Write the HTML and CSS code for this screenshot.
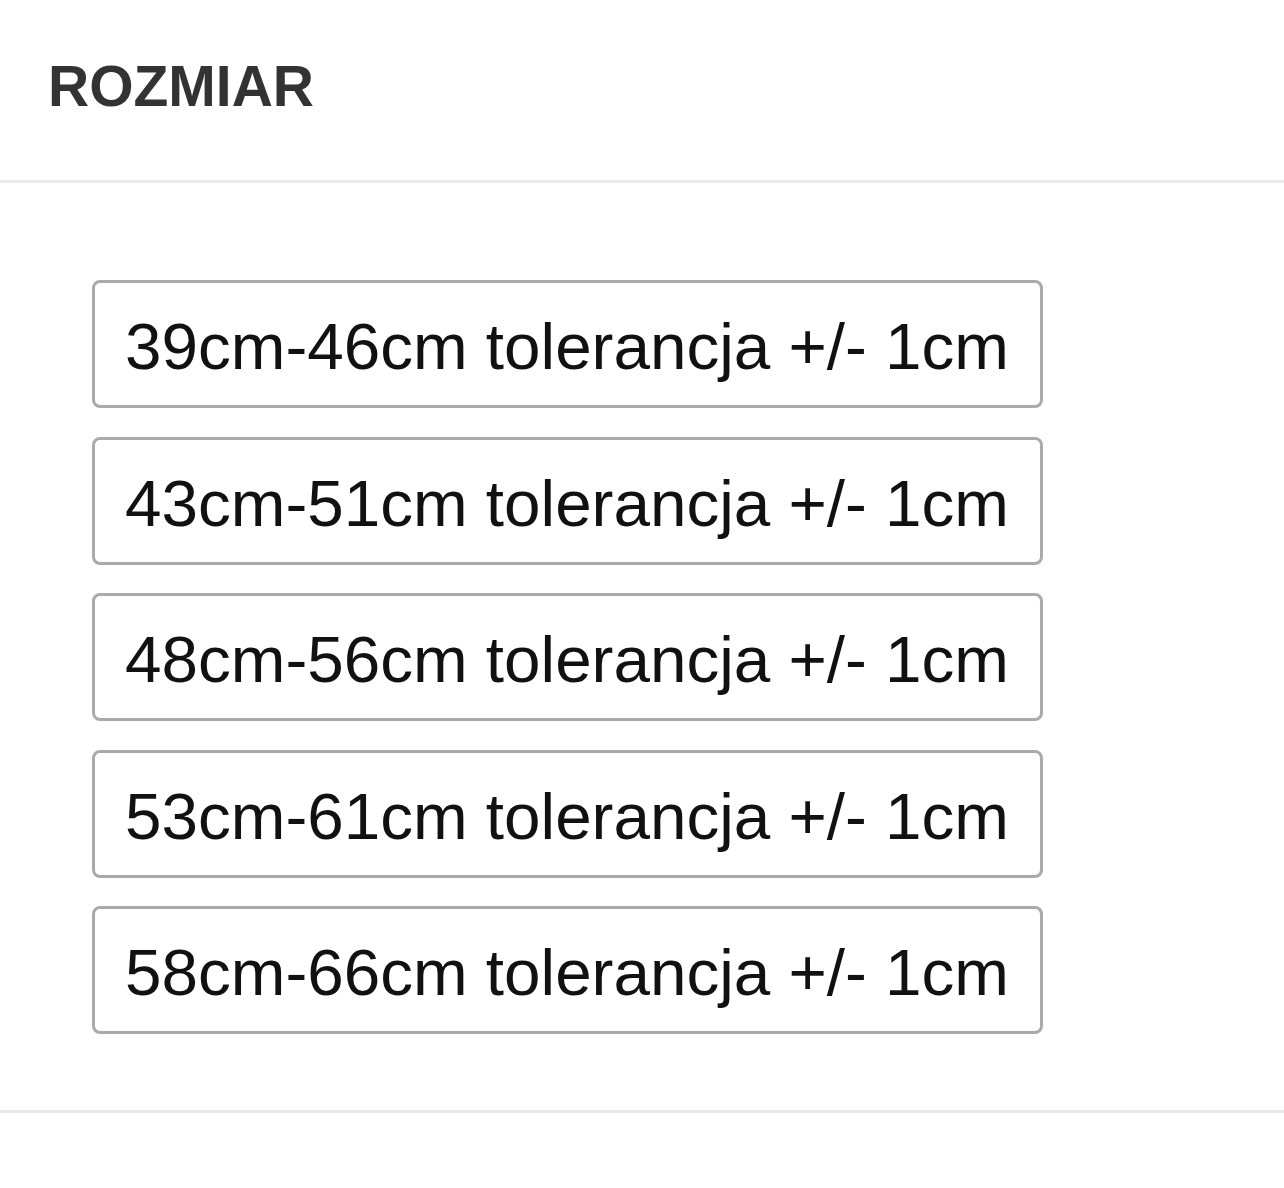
FILE: index.html
```html
<!DOCTYPE html>
<html lang="pl">
<head>
    <meta charset="UTF-8">
    <title>Rozmiar</title>
    <link rel="stylesheet" href="styles.css">
</head>
<body>
    <div class="size-panel">
        <h1 class="size-title">ROZMIAR</h1>
        <div class="size-options">
            <button class="size-option">39cm-46cm tolerancja +/- 1cm</button>
            <button class="size-option">43cm-51cm tolerancja +/- 1cm</button>
            <button class="size-option">48cm-56cm tolerancja +/- 1cm</button>
            <button class="size-option">53cm-61cm tolerancja +/- 1cm</button>
            <button class="size-option">58cm-66cm tolerancja +/- 1cm</button>
        </div>
    </div>
</body>
</html>
```

FILE: styles.css
```css
* {
    margin: 0;
    padding: 0;
    box-sizing: border-box;
}

body {
    background: #ffffff;
    font-family: "Liberation Sans", Arial, sans-serif;
}

.size-panel {
    width: 100%;
}

.size-title {
    padding: 57px 0 65px 48px;
    font-size: 57px;
    line-height: 58px;
    font-weight: bold;
    color: #333333;
    border-bottom: 3px solid #e9e9e9;
}

.size-options {
    display: flex;
    flex-direction: column;
    align-items: flex-start;
    gap: 28.5px;
    padding: 97px 0 76px 92px;
    border-bottom: 3px solid #e9e9e9;
}

.size-option {
    width: 951px;
    padding: 31px 0 25px 30px;
    background: #ffffff;
    border: 3px solid #aaaaaa;
    border-radius: 8px;
    font-family: "Liberation Sans", Arial, sans-serif;
    font-size: 65.6px;
    line-height: 66px;
    color: #111111;
    text-align: left;
    cursor: pointer;
}
```
